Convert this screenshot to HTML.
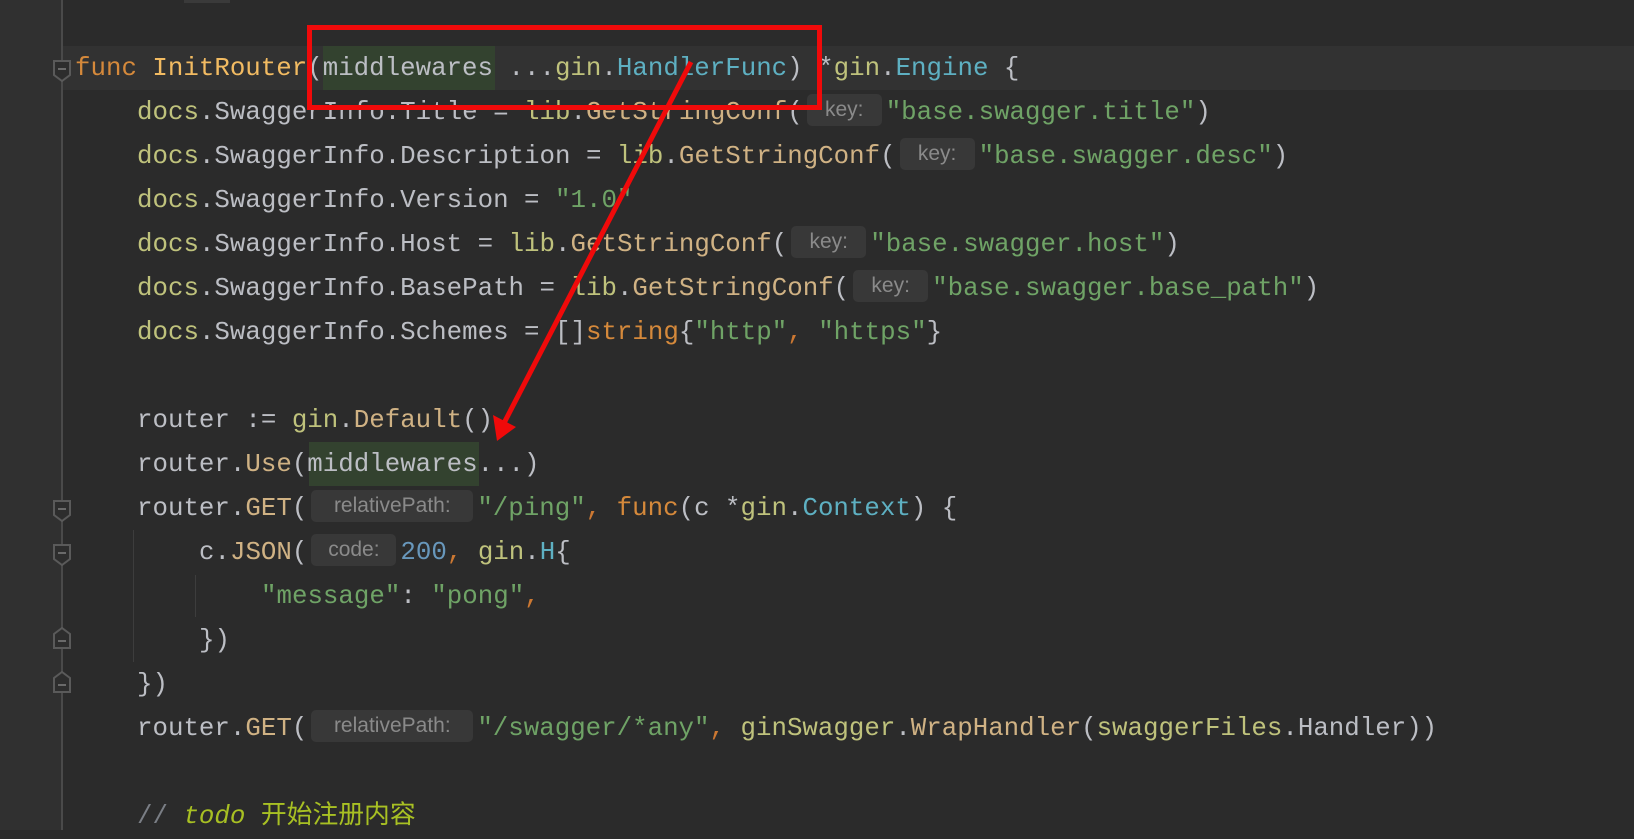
<!DOCTYPE html>
<html><head><meta charset="utf-8"><style>
body{margin:0;width:1634px;height:830px;background:#2b2b2b;overflow:hidden;position:relative;font-family:"Liberation Mono","Noto Sans CJK SC",monospace;}
.gut{position:absolute;left:0;top:0;width:62px;height:830px;background:#303030;}
.vl{position:absolute;left:61px;top:0;width:2px;height:830px;background:#4a4a4a;}
.cur{position:absolute;left:63px;top:46px;width:1571px;height:44px;background:#323232;}
.hl{position:absolute;background:#33422f;height:44px;}
.ln{position:absolute;left:75px;height:44px;line-height:44px;font-size:25.8px;color:#bcbec4;white-space:pre;}
.k{color:#d5893b}.fn{color:#f2bb62}.p{color:#bfc27c}.m{color:#d0b284}.t{color:#5eb0c2}.s{color:#6fa366}.n{color:#6897bb}.o{color:#cc7832}
.h{display:inline-block;box-sizing:border-box;height:32px;line-height:32px;vertical-align:middle;margin:0 4px;background:#383838;border-radius:5px;color:#8a8a8a;font-family:"Liberation Sans",sans-serif;font-size:21px;text-align:center;position:relative;top:-2px}
.ig{position:absolute;width:1px;background:#3d3d3d;}
.fold{position:absolute;left:53px;}
</style></head><body>
<div class="gut"></div><div class="vl"></div>
<div class="cur"></div>
<div style="position:absolute;left:184px;top:0;width:46px;height:3px;background:#3a3a3a"></div>
<div class="hl" style="left:323px;top:46px;width:172px"></div>
<div class="hl" style="left:309px;top:442px;width:170px"></div>
<div class="ig" style="left:133px;top:530px;height:132px"></div>
<div class="ig" style="left:195px;top:575px;height:42px"></div>

<div class="ln" style="top:47px"><span class="k">func</span> <span class="fn">InitRouter</span>(middlewares ...<span class="p">gin</span>.<span class="t">HandlerFunc</span>) *<span class="p">gin</span>.<span class="t">Engine</span> {</div>
<div class="ln" style="top:91px;left:137px"><span class="p">docs</span>.SwaggerInfo.Title = <span class="p">lib</span>.<span class="m">GetStringConf</span>(<span class="h" style="width:75px">key:</span><span class="s">"base.swagger.title"</span>)</div>
<div class="ln" style="top:135px;left:137px"><span class="p">docs</span>.SwaggerInfo.Description = <span class="p">lib</span>.<span class="m">GetStringConf</span>(<span class="h" style="width:75px">key:</span><span class="s">"base.swagger.desc"</span>)</div>
<div class="ln" style="top:179px;left:137px"><span class="p">docs</span>.SwaggerInfo.Version = <span class="s">"1.0"</span></div>
<div class="ln" style="top:223px;left:137px"><span class="p">docs</span>.SwaggerInfo.Host = <span class="p">lib</span>.<span class="m">GetStringConf</span>(<span class="h" style="width:75px">key:</span><span class="s">"base.swagger.host"</span>)</div>
<div class="ln" style="top:267px;left:137px"><span class="p">docs</span>.SwaggerInfo.BasePath = <span class="p">lib</span>.<span class="m">GetStringConf</span>(<span class="h" style="width:75px">key:</span><span class="s">"base.swagger.base_path"</span>)</div>
<div class="ln" style="top:311px;left:137px"><span class="p">docs</span>.SwaggerInfo.Schemes = []<span class="k">string</span>{<span class="s">"http"</span><span class="o">,</span> <span class="s">"https"</span>}</div>
<div class="ln" style="top:399px;left:137px">router := <span class="p">gin</span>.<span class="m">Default</span>()</div>
<div class="ln" style="top:443px;left:137px">router.<span class="m">Use</span>(middlewares...)</div>
<div class="ln" style="top:487px;left:137px">router.<span class="m">GET</span>(<span class="h" style="width:162px">relativePath:</span><span class="s">"/ping"</span><span class="o">,</span> <span class="k">func</span>(c *<span class="p">gin</span>.<span class="t">Context</span>) {</div>
<div class="ln" style="top:531px;left:199px">c.<span class="m">JSON</span>(<span class="h" style="width:85px">code:</span><span class="n">200</span><span class="o">,</span> <span class="p">gin</span>.<span class="t">H</span>{</div>
<div class="ln" style="top:575px;left:261px"><span class="s">"message"</span>: <span class="s">"pong"</span><span class="o">,</span></div>
<div class="ln" style="top:619px;left:199px">})</div>
<div class="ln" style="top:663px;left:137px">})</div>
<div class="ln" style="top:707px;left:137px">router.<span class="m">GET</span>(<span class="h" style="width:162px">relativePath:</span><span class="s">"/swagger/*any"</span><span class="o">,</span> <span class="p">ginSwagger</span>.<span class="m">WrapHandler</span>(<span class="p">swaggerFiles</span>.Handler))</div>
<div class="ln" style="top:795px;left:137px"><span style="color:#7a7e85">// </span><span style="color:#a8c023;font-style:italic">todo</span><span style="color:#a8c023"> 开始注册内容</span></div>

<svg style="position:absolute;left:0;top:0" width="1634" height="830">
<g fill="#2d2d2d" stroke="#5a5a5a" stroke-width="2">
<path d="M54 61h16v14l-8 6l-8-6z"/>
<path d="M54 501h16v14l-8 6l-8-6z"/>
<path d="M54 545h16v14l-8 6l-8-6z"/>
<path d="M54 648h16v-14l-8-6l-8 6z"/>
<path d="M54 692h16v-14l-8-6l-8 6z"/>
</g>
<g stroke="#6a6a6a" stroke-width="2">
<path d="M58 69h8M58 509h8M58 553h8M58 641h8M58 685h8"/>
</g>
<rect x="309.5" y="27.5" width="510" height="80" fill="none" stroke="#f00a0a" stroke-width="5"/>
<line x1="691" y1="62" x2="503" y2="425" stroke="#f00a0a" stroke-width="5"/>
<path d="M497 441L493 415L516 427z" fill="#f00a0a"/>
</svg>
</body></html>
